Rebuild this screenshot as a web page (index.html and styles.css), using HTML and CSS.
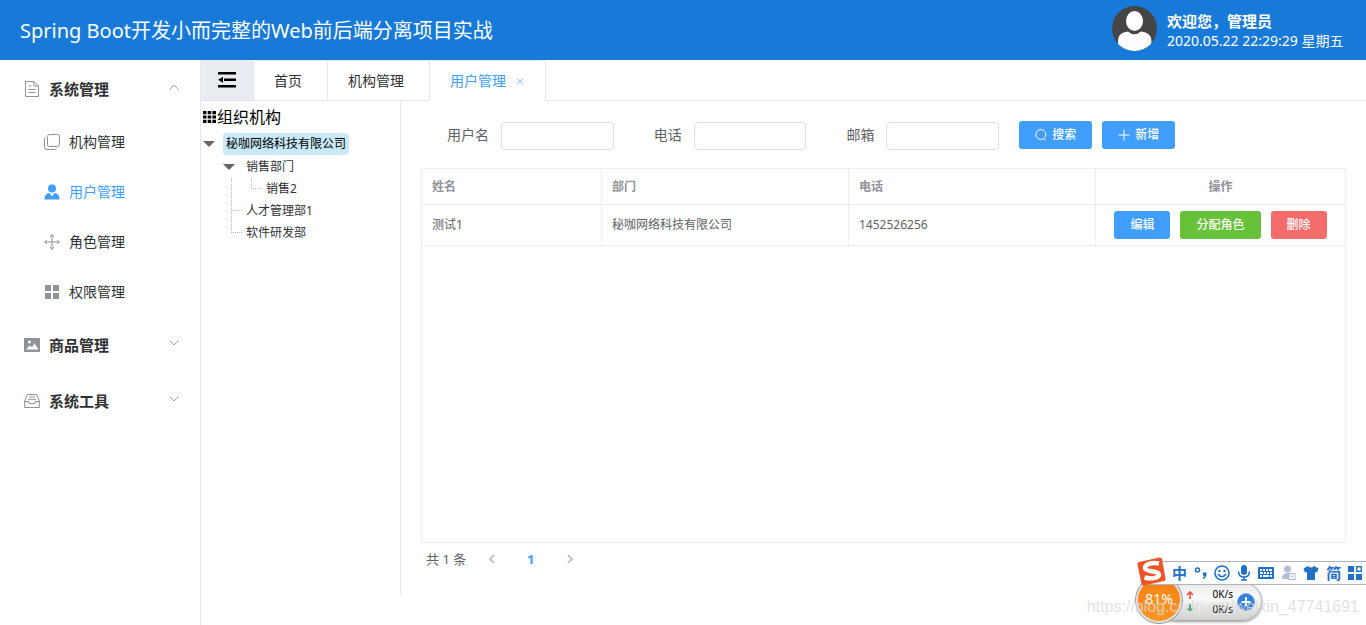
FILE: index.html
```html
<!DOCTYPE html>
<html lang="zh-CN">
<head>
<meta charset="utf-8">
<title>用户管理</title>
<link rel="stylesheet" href="styles.css">
</head>
<body>
<header class="header">
  <h1 class="header-title">Spring Boot开发小而完整的Web前后端分离项目实战</h1>
  <div class="account">
    <svg class="avatar" viewBox="0 0 45 45" aria-hidden="true">
      <defs><clipPath id="disc"><circle cx="22.500" cy="22.500" r="22.500"/></clipPath></defs>
      <g clip-path="url(#disc)">
        <rect width="45" height="45" fill="#454545"/>
        <ellipse cx="22.500" cy="15" rx="8.500" ry="10" fill="#fff"/>
        <path d="M6 45V36C6 29 9 26.500 16 25.500Q22.500 31 29 25.500C36 26.500 39.500 29 39.500 36V45Z" fill="#fff"/>
      </g>
    </svg>
    <div class="account-text">
      <strong class="welcome">欢迎您，管理员</strong>
      <time class="clock">2020.05.22 22:29:29 星期五</time>
    </div>
  </div>
</header>

<div class="body">
  <nav class="sidebar">
    <button class="menu-title" type="button">
      <svg class="icon" viewBox="0 0 16 16"><path d="M1.500.500H10L14.500 5V15.500H1.500ZM10 .500V5H14.500M4.500 5H7.500M4.500 8.500H11.500M4.500 11.500H11.500"/></svg>
      <span>系统管理</span>
      <svg class="arrow" viewBox="0 0 10 10"><path d="M.500 7.500 5 3 9.500 7.500"/></svg>
    </button>
    <a class="menu-item" href="#">
      <svg class="icon" viewBox="0 0 16 16"><rect x="3.500" y=".500" width="12" height="12" rx="2"/><path d="M1.500 3.500Q.500 4 .500 5V13Q.500 15.500 3 15.500H11Q12 15.500 12.500 14.500"/></svg>
      <span>机构管理</span>
    </a>
    <a class="menu-item active" href="#">
      <svg class="icon solid" viewBox="0 0 16 16"><circle cx="8" cy="4.500" r="4"/><path d="M.500 15.500Q.500 9.500 5.500 9L8 12.500 10.500 9Q15.500 9.500 15.500 15.500Z"/></svg>
      <span>用户管理</span>
    </a>
    <a class="menu-item" href="#">
      <svg class="icon" viewBox="0 0 16 16"><path d="M8 .500V15.500M.500 8H15.500M6 3 8 .700 10 3M6 13 8 15.300 10 13M3 6 .700 8 3 10M13 6 15.300 8 13 10"/></svg>
      <span>角色管理</span>
    </a>
    <a class="menu-item" href="#">
      <svg class="icon solid" viewBox="0 0 16 16"><path d="M1 1H7V7H1ZM9 1H15V7H9ZM1 9H7V15H1ZM9 9H15V15H9Z"/></svg>
      <span>权限管理</span>
    </a>
    <button class="menu-title" type="button">
      <svg class="icon solid" viewBox="0 0 16 16"><path fill-rule="evenodd" d="M0 1H16V15H0ZM2 12.500H14.500L10.500 6.500 8 10 5.500 8.500ZM5.500 3.500A1.500 1.500 0 1 0 5.510 3.500Z"/></svg>
      <span>商品管理</span>
      <svg class="arrow blue" viewBox="0 0 10 10"><path d="M.500 2.500 5 7 9.500 2.500"/></svg>
    </button>
    <button class="menu-title" type="button">
      <svg class="icon" viewBox="0 0 16 16"><path d="M.600 8 3.500 1.500H12.500L15.400 8V14.500H.600ZM.600 8.500H5V10.500H11V8.500H15.400M5 4H11M4 6.300H12"/></svg>
      <span>系统工具</span>
      <svg class="arrow blue" viewBox="0 0 10 10"><path d="M.500 2.500 5 7 9.500 2.500"/></svg>
    </button>
  </nav>

  <main class="main">
    <div class="tabbar">
      <button class="collapse" type="button" aria-label="收起菜单">
        <svg width="18" height="16" viewBox="0 0 18 16"><path d="M0 0H18V2.500H0ZM6 6.500H18V9H6ZM0 13H18V15.500H0ZM0 7.700 5 4.700V10.700Z"/></svg>
      </button>
      <div class="tabs">
        <a class="tab" href="#">首页</a>
        <a class="tab" href="#">机构管理</a>
        <a class="tab current" href="#">用户管理
          <svg class="close" viewBox="0 0 8 8"><path d="M1 1.500 7 7.500M7 1.500 1 7.500"/></svg>
        </a>
      </div>
    </div>

    <div class="content">
      <aside class="org">
        <h2 class="org-title">
          <svg width="13" height="12" viewBox="0 0 13 12"><path d="M0 0H3.500V3.300H0ZM4.700 0H8.200V3.300H4.700ZM9.400 0H13V3.300H9.400ZM0 4.400H3.500V7.600H0ZM4.700 4.400H8.200V7.600H4.700ZM9.400 4.400H13V7.600H9.400ZM0 8.700H3.500V12H0ZM4.700 8.700H8.200V12H4.700ZM9.400 8.700H13V12H9.400Z"/></svg>
          <span>组织机构</span>
        </h2>
        <ul class="tree">
          <li>
            <div class="node"><i class="caret"></i><span class="node-name selected">秘咖网络科技有限公司</span></div>
            <ul class="branch">
              <li>
                <div class="node"><i class="caret"></i><span class="node-name">销售部门</span></div>
                <ul class="branch">
                  <li><div class="node"><i class="elbow"></i><span class="node-name">销售2</span></div></li>
                </ul>
              </li>
              <li><div class="node"><i class="elbow tee"></i><span class="node-name">人才管理部1</span></div></li>
              <li><div class="node"><i class="elbow"></i><span class="node-name">软件研发部</span></div></li>
            </ul>
          </li>
        </ul>
      </aside>

      <section class="users">
        <form class="search">
          <div class="field"><label for="name">用户名</label><input id="name" type="text"></div>
          <div class="field"><label for="phone">电话</label><input id="phone" type="text"></div>
          <div class="field"><label for="mail">邮箱</label><input id="mail" type="text"></div>
          <div class="form-actions">
            <button class="btn primary" type="button">
              <svg width="12" height="12" viewBox="0 0 12 12"><circle cx="5.800" cy="5.500" r="5"/><path d="M8.500 9.500 10.500 11.500"/></svg>搜索
            </button>
            <button class="btn primary" type="button">
              <svg width="12" height="12" viewBox="0 0 12 12"><path d="M6 .500V11.500M.500 6H11.500"/></svg>新增
            </button>
          </div>
        </form>

        <div class="table-box">
          <table class="table">
            <colgroup><col class="col-name"><col><col><col class="col-ops"></colgroup>
            <thead><tr><th>姓名</th><th>部门</th><th>电话</th><th class="ops">操作</th></tr></thead>
            <tbody>
              <tr>
                <td>测试1</td><td>秘咖网络科技有限公司</td><td>1452526256</td>
                <td class="ops">
                  <div class="row-actions">
                    <button class="btn primary" type="button">编辑</button>
                    <button class="btn success" type="button">分配角色</button>
                    <button class="btn danger" type="button">删除</button>
                  </div>
                </td>
              </tr>
            </tbody>
          </table>
        </div>

        <div class="pagination">
          <span class="total">共 1 条</span>
          <button class="page" type="button" aria-label="上一页"><svg width="8" height="10" viewBox="0 0 8 10"><path d="M6 1 2 5 6 9"/></svg></button>
          <button class="page on" type="button">1</button>
          <button class="page" type="button" aria-label="下一页"><svg width="8" height="10" viewBox="0 0 8 10"><path d="M2 1 6 5 2 9"/></svg></button>
        </div>
      </section>
    </div>
  </main>
</div>

<div class="desktop">
  <div class="monitor">
    <svg width="8" height="24" viewBox="0 0 8 24"><path d="M4 9V2M1 5 4 2 7 5" stroke="#e2553d" stroke-width="1.600"/><path d="M4 14V21M1 18 4 21 7 18" stroke="#35a65a" stroke-width="1.600"/></svg>
    <div class="speeds"><span>0K/s</span><span>0K/s</span></div>
    <svg width="18" height="18" viewBox="0 0 18 18"><circle cx="9" cy="9" r="8.500" fill="#2f7fe0" stroke="#8aa9cf"/><path d="M9 4V13M4.500 9H13.500" stroke="#fff" stroke-width="2"/></svg>
  </div>
  <div class="gauge">81%</div>
  <div class="ime">
    <b>中</b>
    <svg width="14" height="14" viewBox="0 0 14 14"><circle cx="3.500" cy="4" r="2" fill="none" stroke="#1f70c6" stroke-width="1.500"/><path d="M9 6.500H12.500V9Q12 12 9 13V11.500Q10.500 11 10.500 9.700H9Z"/></svg>
    <svg width="16" height="16" viewBox="0 0 16 16"><circle cx="8" cy="8" r="7" fill="none" stroke="#1f70c6" stroke-width="1.600"/><circle cx="5.500" cy="6" r="1.200"/><circle cx="10.500" cy="6" r="1.200"/><path d="M4 9Q8 14.500 12 9" fill="none" stroke="#1f70c6" stroke-width="1.500"/></svg>
    <svg width="14" height="16" viewBox="0 0 14 16"><rect x="4" width="6" height="10" rx="3"/><path d="M1.500 6.500Q1.500 12 7 12T12.500 6.500M7 12V15M4 15H10" fill="none" stroke="#1f70c6" stroke-width="1.600"/></svg>
    <svg width="16" height="12" viewBox="0 0 16 12"><path fill-rule="evenodd" d="M1 0H15Q16 0 16 1V11Q16 12 15 12H1Q0 12 0 11V1Q0 0 1 0ZM2 2V4H4V2ZM5 2V4H7V2ZM8 2V4H10V2ZM11 2V4H14V2ZM2 5V7H5V5ZM6 5V7H8V5ZM9 5V7H11V5ZM12 5V7H14V5ZM2 8V10H4V8ZM5 8V10H11V8ZM12 8V10H14V8Z"/></svg>
    <svg width="16" height="16" viewBox="0 0 16 16"><g fill="#b3bfd6"><circle cx="6.500" cy="4" r="3.500"/><path d="M1 14Q1 8 6.500 8T12 14Z"/></g><rect x="8" y="8.500" width="6" height="6" fill="#fff" stroke="#a9b7d2"/><path d="M11 10.500V12.500" stroke="#8495b8"/></svg>
    <svg width="16" height="14" viewBox="0 0 16 14"><path d="M5 0Q8 3 11 0L15.500 2.500 14 6.500 12 6V14H4V6L2 6.500 .500 2.500Z"/></svg>
    <b>简</b>
    <svg width="14" height="14" viewBox="0 0 14 14"><path d="M0 0H6V6H0ZM0 8H6V14H0ZM8 8H14V14H8Z"/><rect x="8.700" y=".700" width="4.600" height="4.600" fill="none" stroke="#1f70c6" stroke-width="1.400"/></svg>
  </div>
  <svg class="sogou" width="30" height="30" viewBox="0 0 30 30"><path d="M2 5 22.500 .500Q24.500 .300 25 2L28.500 21.500Q28.800 23.500 27 24L7 28.500Q5 28.700 4.500 27L.500 7.500Q.300 5.500 2 5Z" fill="#ee5328"/><path d="M22 6.500C14 5 7.500 7.500 8 11.200S20.500 13.500 21.800 17 15 22.500 7.500 20.500" fill="none" stroke="#fff" stroke-width="4.500"/></svg>
  <span class="watermark">https://blog.csdn.net/weixin_47741691</span>
</div>
</body>
</html>
```
FILE: styles.css
```css
* { box-sizing: border-box; }
body {
  margin: 0;
  min-height: 100vh;
  display: flex;
  flex-direction: column;
  position: relative;
  overflow: hidden;
  background: #fff;
  color: #303133;
  font: 14px/20px "Noto Sans", "Noto Sans CJK SC", sans-serif;
}
button, input { font: inherit; color: inherit; }
button { margin: 0; padding: 0; border: 0; background: none; cursor: pointer; }
a { color: inherit; text-decoration: none; }
ul { list-style: none; margin: 0; padding: 0; }
svg { flex: none; display: block; }

.header {
  height: 60px;
  padding: 0 20px;
  display: flex;
  align-items: center;
  justify-content: space-between;
  background: #177ad9;
  color: #fff;
}
.header-title { margin: 0; font-size: 20px; font-weight: 400; line-height: 28px; padding-top: 2px; }
.account { display: flex; align-items: center; gap: 10px; }
.avatar { width: 45px; height: 45px; margin-bottom: 4px; }
.account-text { display: flex; flex-direction: column; min-width: 179px; padding-top: 1px; }
.welcome { font-size: 15px; }
.clock { font-size: 14px; }

.body { flex: 1; display: flex; }

.sidebar { width: 200px; padding-top: 1px; }
.menu-title, .menu-item { display: flex; align-items: center; width: 100%; }
.menu-title {
  height: 56px;
  padding: 0 21px 0 24px;
  gap: 9px;
  font-size: 15px;
  font-weight: 700;
}
.menu-item { height: 50px; padding-left: 44px; gap: 9px; }
.icon { width: 16px; height: 16px; fill: none; stroke: #909399; }
.icon.solid { fill: #909399; stroke: none; }
.active { color: #409eff; }
.active .icon { fill: #409eff; }
.arrow { width: 10px; height: 10px; margin: 0 0 4px auto; fill: none; stroke: #a5a8ad; }
.arrow.blue { stroke: #9aabba; }

.main {
  flex: 1;
  min-width: 0;
  display: flex;
  flex-direction: column;
  border-left: 1px solid #e4e7ed;
}
.tabbar { display: flex; height: 41px; border-bottom: 1px solid #e4e7ed; }
.collapse {
  width: 52px;
  display: flex;
  align-items: center;
  justify-content: center;
  background: #e9edf2;
}
.tabs {
  display: flex;
  height: 41px;
  border: 1px solid #e4e7ed;
  border-bottom: 0;
  border-radius: 4px 4px 0 0;
}
.tab {
  display: flex;
  align-items: center;
  padding: 0 25px 0 20px;
  border-bottom: 1px solid #e4e7ed;
}
.tab + .tab { border-left: 1px solid #e4e7ed; }
.tab.current {
  gap: 10px;
  padding-right: 21px;
  color: #409eff;
  border-bottom-color: #fff;
}
.close { width: 8px; height: 8px; stroke: #6fb4fb; }

.content { flex: 1; display: flex; margin-bottom: 30px; }
.org { width: 200px; border-right: 1px solid #e4e7ed; }
.org-title {
  display: flex;
  align-items: center;
  gap: 1px;
  margin: 5px 0 5px 2px;
  color: #000;
  font-size: 16px;
  font-weight: 400;
  line-height: 22px;
}
.tree { padding-left: 2px; font-size: 12px; line-height: 22px; }
.tree > li > .node { margin-bottom: 1px; }
.branch { padding-left: 20px; }
.branch > li { position: relative; }
.node { display: flex; align-items: center; height: 22px; gap: 8px; }
.node-name { padding: 0 3px; }
.selected { background: #c9e9f8; border-radius: 4px; color: #000; }
.caret {
  width: 12px;
  border: 6px solid transparent;
  border-top-color: #666;
  border-bottom: 0;
}
.elbow {
  width: 20px;
  height: 22px;
  margin-right: -8px;
  background:
    repeating-linear-gradient(90deg, #bbb 0 1px, transparent 1px 2px) 8px 10px / 12px 1px no-repeat,
    repeating-linear-gradient(#bbb 0 1px, transparent 1px 2px) 8px 0 / 1px 10px no-repeat;
}
.tee {
  background:
    repeating-linear-gradient(90deg, #bbb 0 1px, transparent 1px 2px) 8px 10px / 12px 1px no-repeat,
    repeating-linear-gradient(#bbb 0 1px, transparent 1px 2px) 8px 0 / 1px 22px no-repeat;
}
.branch > li:has(> .branch)::before {
  content: "";
  position: absolute;
  left: 8px;
  top: 22px;
  bottom: 0;
  width: 1px;
  background: repeating-linear-gradient(#bbb 0 1px, transparent 1px 2px);
}

.users {
  flex: 1;
  min-width: 0;
  display: flex;
  flex-direction: column;
  padding: 20px;
  color: #606266;
}
.search { display: grid; grid-template-columns: 5fr 5fr 5fr 9fr; margin-bottom: 18px; }
.field { display: flex; align-items: flex-start; height: 29px; min-width: 0; }
.field label { width: 80px; flex: none; padding-right: 12px; text-align: right; line-height: 28px; }
.field input {
  flex: 1;
  min-width: 0;
  height: 28px;
  padding: 0 10px;
  border: 1px solid #dcdfe6;
  border-radius: 4px;
  background: #fff;
  align-self: flex-end;
}
.form-actions { display: flex; gap: 10px; padding-left: 20px; }
.btn {
  display: flex;
  align-items: center;
  gap: 5px;
  height: 28px;
  padding: 0 16px;
  border-radius: 3px;
  color: #fff;
  font-size: 12px;
  font-weight: 500;
}
.btn svg { fill: none; stroke: #fff; }
.primary { background: #409eff; }
.success { background: #67c23a; }
.danger { background: #f56c6c; }

.table-box { flex: 1; border: 1px solid #ebeef5; }
.table {
  width: 100%;
  table-layout: fixed;
  border-collapse: separate;
  border-spacing: 0;
  font-size: 12px;
  line-height: 20px;
}
.col-name { width: 180px; }
.col-ops { width: 249px; }
.table th, .table td {
  height: 41px;
  padding: 0 10px;
  border-right: 1px solid #ebeef5;
  border-bottom: 1px solid #ebeef5;
  text-align: left;
}
.table th { height: 36px; color: #909399; }
.table .ops { text-align: center; border-right: 0; }
.row-actions { display: flex; justify-content: center; gap: 10px; }

.pagination {
  display: flex;
  align-items: center;
  height: 32px;
  padding-left: 5px;
  font-size: 13px;
}
.total { margin-right: 6px; }
.page {
  width: 39px;
  height: 28px;
  display: flex;
  align-items: center;
  justify-content: center;
  font-weight: 700;
}
.page svg { fill: none; stroke: #c0c4cc; stroke-width: 2; }
.on { color: #409eff; }

/* floating desktop widgets */
.desktop {
  position: absolute;
  right: 0;
  bottom: 0;
  width: 280px;
  height: 70px;
  overflow: hidden;
}
.ime {
  position: absolute;
  left: 60px;
  right: 0;
  top: 6px;
  height: 24px;
  display: flex;
  align-items: center;
  justify-content: space-between;
  padding: 0 4px 0 26px;
  border: 1px solid #aeb4bd;
  border-width: 1px 0;
  background: #fff;
  color: #1f70c6;
  fill: #1f70c6;
  font-size: 15px;
}
.sogou { position: absolute; left: 51px; top: 2px; }
.monitor {
  position: absolute;
  left: 70px;
  top: 27px;
  width: 106px;
  height: 39px;
  display: flex;
  align-items: center;
  justify-content: flex-end;
  padding-right: 6px;
  border: 1px solid #aaa;
  border-radius: 20px;
  background: linear-gradient(#e9e9e9, #fafafa 40%, #cfcfcf);
  box-shadow: 0 1px 3px #999;
  color: #000;
  fill: none;
  font-size: 10px;
  line-height: 15px;
}
.speeds { display: flex; flex-direction: column; margin: 0 4px 0 19px; }
.gauge {
  position: absolute;
  left: 50px;
  top: 22px;
  width: 46px;
  height: 46px;
  border: 2px solid #ddd;
  border-radius: 50%;
  outline: 1px solid #999;
  background: radial-gradient(circle at 50% 80%, #ff9a26, #fb8412 70%, #d96a10);
  color: #fff;
  font-size: 14px;
  line-height: 40px;
  text-align: center;
}
.watermark {
  position: absolute;
  right: 7px;
  bottom: 8px;
  color: rgba(218, 218, 218, .8);
  font: 16px/20px "Liberation Sans", sans-serif;
  white-space: nowrap;
}
```
